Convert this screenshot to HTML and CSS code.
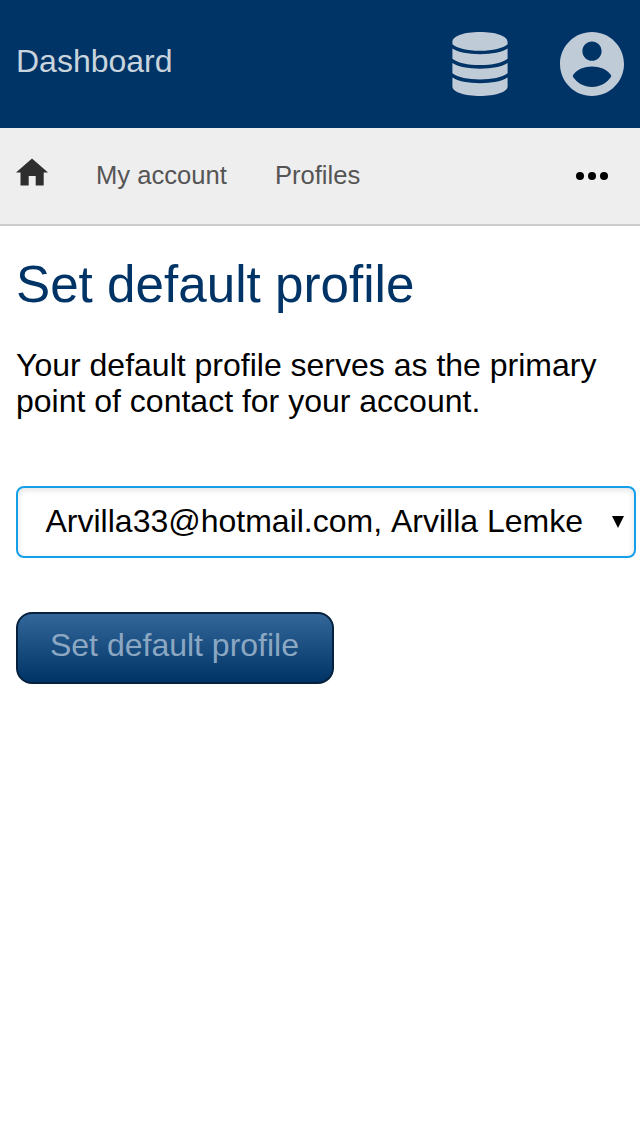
FILE: index.html
```html
<!DOCTYPE html>
<html lang="en">
<head>
<meta charset="utf-8">
<title>Set default profile</title>
<link rel="stylesheet" href="styles.css">
</head>
<body>
<header class="topbar">
  <span class="brand">Dashboard</span>
  <div class="actions">
    <svg class="database" viewBox="0 0 56 64"><path d="M.4 10C.4 4 12 0 28 0s27.600 4 27.600 10v2.300C51 16.300 41 18.800 28 18.800S5 16.300 .4 12.300zM.4 16.500C6 20.200 16 22.200 28 22.200s22-2 27.600-5.700V26.700C50 31 40 33.100 28 33.100S6 31 .4 26.700zM.4 31C6 34.700 16 36.700 28 36.700s22-2 27.600-5.700V41.300C50 45.500 40 47.500 28 47.500S6 45.500 .4 41.300zM.4 45.500C6 49.200 16 51.200 28 51.200s22-2 27.600-5.700V54.500C55.600 60 43 64 28 64S.4 60 .4 54.500z"/></svg>
    <svg class="user" viewBox="2 2 20 20"><path d="M12 2C6.480 2 2 6.480 2 12s4.480 10 10 10 10-4.480 10-10S17.520 2 12 2zm0 3c1.660 0 3 1.340 3 3s-1.340 3-3 3-3-1.340-3-3 1.340-3 3-3zm0 14.200c-2.500 0-4.710-1.280-5.900-3.100q-.2-.35 0-.7c1.200-1.700 3.600-2.600 5.900-2.600s4.700.9 5.900 2.600q.2.350 0 .7c-1.190 1.820-3.400 3.100-5.900 3.100z"/></svg>
  </div>
</header>
<nav class="crumbs">
  <svg class="home" viewBox="0 0 32 28"><path d="M16 .4 32 14.400H27.700V27.500H19.700V18H12.700V27.500H4.500V14.400H0z"/></svg>
  <span class="crumb account">My account</span>
  <span class="crumb">Profiles</span>
  <svg class="more" viewBox="0 0 32 8"><circle cx="4" cy="4" r="4"/><circle cx="16" cy="4" r="4"/><circle cx="28" cy="4" r="4"/></svg>
</nav>
<main class="content">
  <h1 class="title">Set default profile</h1>
  <p class="intro">Your default profile serves as the primary point of contact for your account.</p>
  <div class="select"><span>Arvilla33@hotmail.com, Arvilla Lemke</span><svg class="arrow" viewBox="0 0 12 12"><path d="M0 0h12L6 12z"/></svg></div>
  <button class="submit" type="button">Set default profile</button>
</main>
</body>
</html>
```
FILE: styles.css
```css
* { box-sizing: border-box; }
body { margin: 0; background: #fff; color: #000; font-family: "Liberation Sans", Arial, sans-serif; font-size: 32px; }
.topbar { display: flex; justify-content: space-between; height: 128px; padding: 32px 16px; background: #003366; color: #c9d4dc; }
.brand { line-height: 58px; }
.actions { display: flex; gap: 52px; }
.actions svg { height: 64px; fill: #c0cbd8; }
.database { width: 56px; }
.user { width: 64px; }
.crumbs { display: flex; align-items: center; height: 98px; padding: 0 32px 2px 16px; background: #eee; border-bottom: 2px solid #ccc; color: #555; font-size: 25.600px; }
.home { width: 32px; height: 28px; margin-bottom: 6px; fill: #2e2e2e; }
.account { margin: 0 48px; }
.more { width: 32px; height: 8px; margin: 2px 0 0 auto; }
.content { padding: 27px 4px 0 16px; }
.title { margin: 0; color: #003366; font-size: 51.200px; font-weight: 400; line-height: 64px; }
.intro { margin: 30px 0 0; line-height: 36px; }
.select { display: flex; align-items: center; justify-content: space-between; height: 72px; margin-top: 67px; padding: 0 10px 2px 27.500px; border: 2px solid #149fe8; border-radius: 8px; box-shadow: inset 0 2px 6px rgba(0,0,0,.12); font-kerning: none; white-space: nowrap; }
.arrow { width: 12px; height: 12px; margin-top: 2px; }
.submit { display: block; width: 318px; height: 72px; margin-top: 54px; padding: 0 1px 6px 0; border: 2px solid #06213d; border-radius: 16px; background: linear-gradient(#336699, #003366); color: #8ca7c2; font: inherit; }
```
